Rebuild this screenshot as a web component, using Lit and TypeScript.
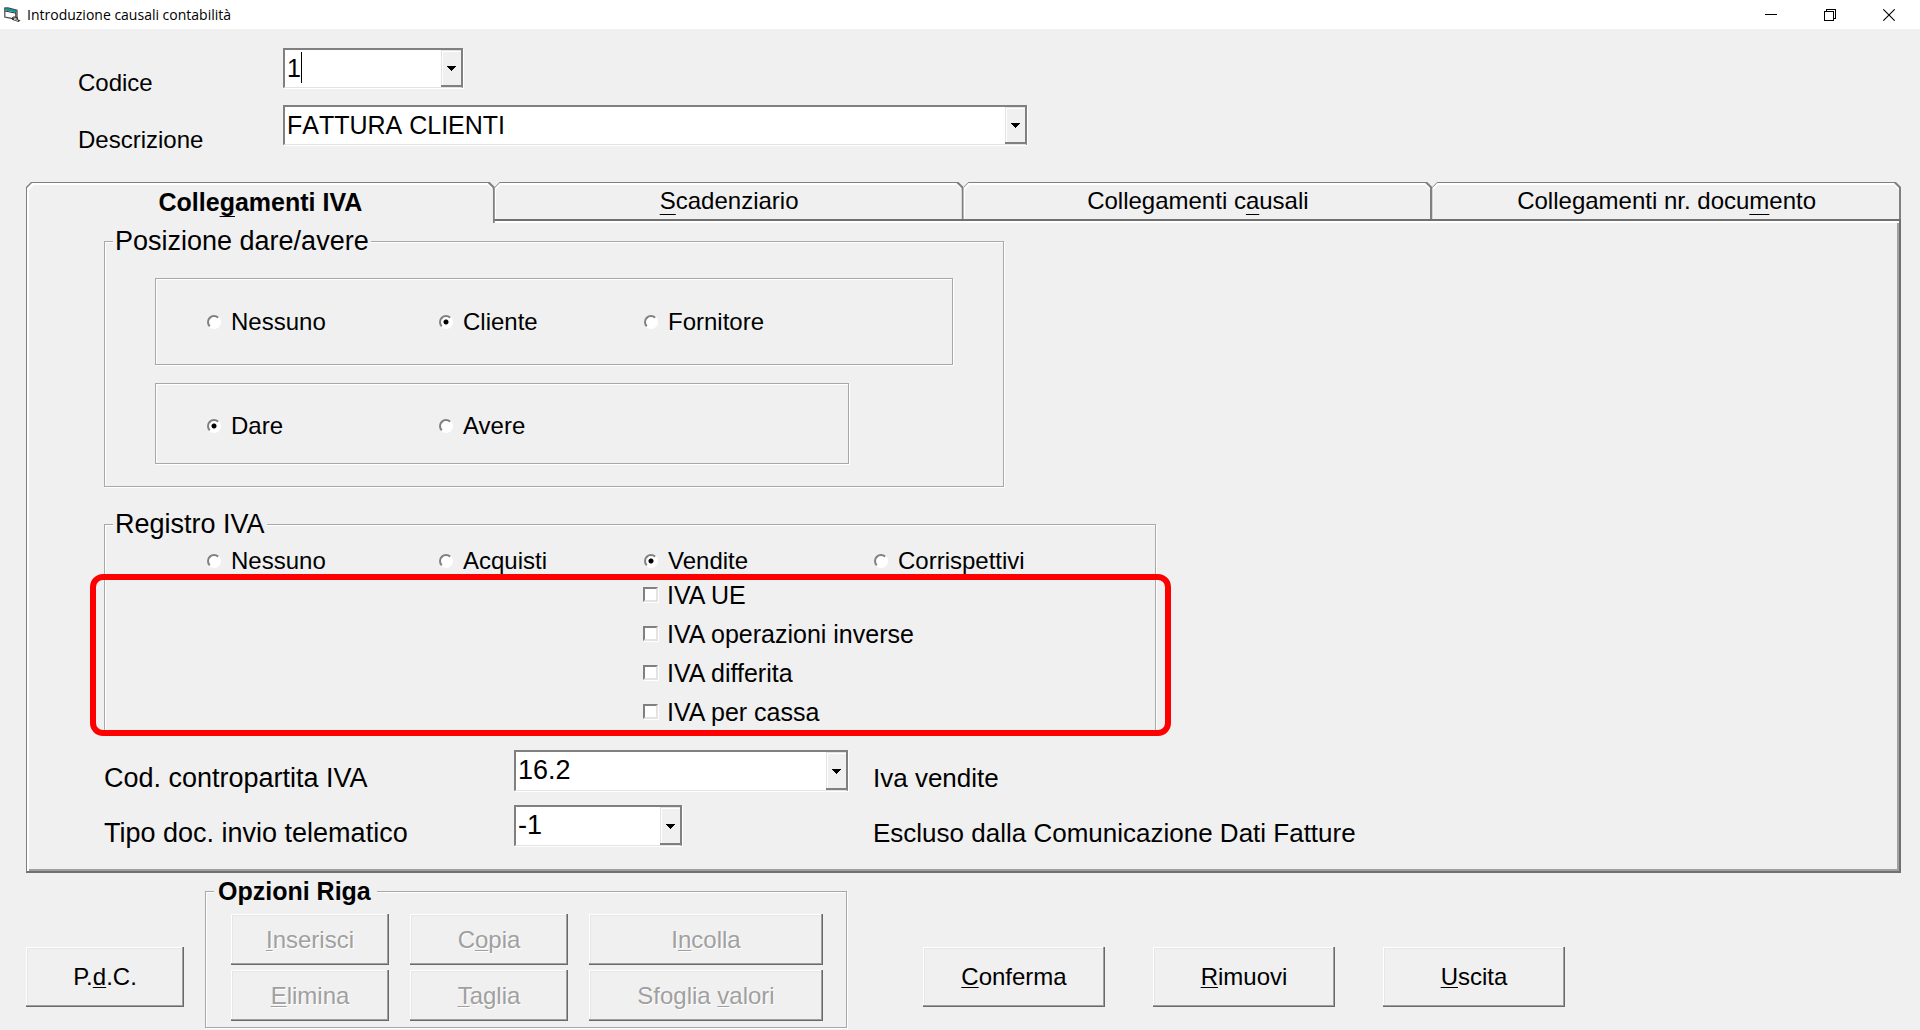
import { LitElement, html, css, svg, nothing, TemplateResult } from "lit";
import { customElement, property, state } from "lit/decorators.js";
import { classMap } from "lit/directives/class-map.js";

/** Splits a caption such as "Colle&gamenti" and underlines its access key. */
function caption(text: string): TemplateResult {
  const at = text.indexOf("&");
  if (at < 0) return html`${text}`;
  return html`${text.slice(0, at)}<u>${text[at + 1]}</u>${text.slice(at + 2)}`;
}

const arrow = svg`<path d="M0 0h9v1h-1v1h-1v1h-1v1h-1v1h-1v-1h-1v-1h-1v-1h-1v-1h-1z" fill="#000"/>`;

@customElement("combo-field")
class ComboField extends LitElement {
  @property() value = "";
  @property() label = "";
  @property({ type: Boolean }) editable = false;

  static styles = css`
    :host {
      display: block;
      font-family: "Liberation Sans", Arial, sans-serif;
    }
    .box {
      display: grid;
      grid-template-columns: 1fr 20px;
      height: var(--combo-height, 40px);
      box-sizing: border-box;
      background: #fff;
      border: 2px solid #808080;
      border-color: #808080 #808080 #e3e3e3 #808080;
      border-bottom-width: 1px;
      box-shadow: 1px 1px #fff;
      position: relative;
    }
    .entry {
      grid-row: 1;
      grid-column: 1 / 3;
      min-width: 0;
      width: 100%;
      height: 100%;
      margin: 0;
      padding: 0 22px 2px 2px;
      border: 0;
      outline: 0;
      border-radius: 0;
      appearance: none;
      background: transparent;
      color: #000;
      font: inherit;
      font-kerning: none;
    }
    .drop {
      grid-row: 1;
      grid-column: 2;
      display: flex;
      align-items: center;
      justify-content: center;
      padding: 0;
      border: 0;
      background: #f0f0f0;
      box-shadow: inset 0 -2px #808080, inset 1px 1px #e3e3e3, inset 2px 2px #fff;
      z-index: 1;
    }
    span.drop {
      pointer-events: none;
    }
    .caret {
      position: absolute;
      left: 16px;
      top: 2px;
      width: 1px;
      height: 31px;
      background: #000;
    }
  `;

  render() {
    const icon = html`<svg width="9" height="5" viewBox="0 0 9 5" shape-rendering="crispEdges">${arrow}</svg>`;
    return html`<div class="box">
      ${this.editable
        ? html`<input class="entry" aria-label=${this.label} .value=${this.value} />
            <button class="drop" aria-label="Apri elenco">${icon}</button>
            <span class="caret"></span>`
        : html`<select class="entry" aria-label=${this.label}>
              <option selected>${this.value}</option>
            </select>
            <span class="drop">${icon}</span>`}
    </div>`;
  }
}

interface Option {
  text: string;
  on?: boolean;
}

@customElement("app-root")
class AppRoot extends LitElement {
  @state() private active = 0;

  private tabs = ["Colle&gamenti IVA", "&Scadenziario", "Collegamenti c&ausali", "Collegamenti nr. docu&mento"];
  private subjects: Option[] = [{ text: "Nessuno" }, { text: "Cliente", on: true }, { text: "Fornitore" }];
  private sides: Option[] = [{ text: "Dare", on: true }, { text: "Avere" }];
  private registers: Option[] = [
    { text: "Nessuno" },
    { text: "Acquisti" },
    { text: "Vendite", on: true },
    { text: "Corrispettivi" },
  ];
  private flags = ["IVA UE", "IVA operazioni inverse", "IVA differita", "IVA per cassa"];
  private rowActions = ["&Inserisci", "C&opia", "I&ncolla", "&Elimina", "&Taglia", "Sfoglia &valori"];

  static styles = css`
    :host {
      display: flex;
      flex-direction: column;
      min-height: 100vh;
      box-sizing: border-box;
      background: #f0f0f0;
      color: #000;
      font: 25px/28px "Liberation Sans", Arial, sans-serif;
    }
    * {
      box-sizing: border-box;
    }
    u {
      text-decoration-thickness: 1px;
      text-underline-offset: 2px;
      text-decoration-skip-ink: none;
    }
    .titlebar {
      display: flex;
      align-items: center;
      height: 29px;
      padding-left: 4px;
      background: #fff;
      font: 14px/20px "Open Sans", sans-serif;
    }
    .title {
      flex: 1;
      margin: 0;
      padding-left: 6px;
      font: inherit;
    }
    .winbtn {
      display: flex;
      align-items: center;
      justify-content: center;
      width: 59px;
      height: 29px;
      padding: 0;
      border: 0;
      background: none;
    }
    .winbtns {
      display: flex;
      padding-right: 2px;
    }
    .head {
      display: grid;
      grid-template-columns: 205px minmax(0, 744px);
      row-gap: 2px;
      padding: 19px 20px 22px 78px;
    }
    .headlabel {
      padding-top: 15px;
      font-size: 24px;
      line-height: 40px;
    }
    .short {
      width: 180px;
    }
    .tabbed {
      margin: 0 19px 0 26px;
    }
    .tabs {
      display: flex;
    }
    .tab {
      flex: 1;
      position: relative;
      height: 37px;
      padding: 0;
      border: 0;
      background: #808080;
      color: #000;
      font: 24px/28px "Liberation Sans", Arial, sans-serif;
      clip-path: polygon(0 5px, 5px 0, calc(100% - 5px) 0, 100% 5px, 100% 100%, 0 100%);
    }
    .tab::before,
    .tab::after {
      content: "";
      position: absolute;
      inset: 1px 2px 0 0;
      background: #fff;
      clip-path: polygon(0 5px, 5px 0, calc(100% - 5px) 0, 100% 5px, 100% 100%, 0 100%);
    }
    .tab::after {
      inset: 3px 2px 0 1px;
      background: #f0f0f0;
    }
    .tab:first-child::before {
      left: 1px;
    }
    .tab:first-child::after {
      left: 3px;
    }
    .tab.active {
      z-index: 2;
      height: 41px;
      margin-bottom: -4px;
      padding-bottom: 2px;
      font-size: 25px;
      font-weight: bold;
    }
    .tabtext {
      position: relative;
      z-index: 1;
    }
    .tabtext u {
      text-underline-offset: 5px;
    }
    .panel {
      padding: 5px 20px 17px 77px;
      border: 1px solid #808080;
      border-top: 2px solid #707070;
      border-right: 2px solid #707070;
      border-bottom: 2px solid #707070;
      box-shadow: inset 2px 2px #fff, inset -2px -2px #a0a0a0;
    }
    .group {
      min-width: 0;
      margin: 0;
      padding: 0;
      border: 1px solid #a8a8a8;
      box-shadow: 1px 1px #fff, inset 1px 1px #fff;
    }
    .legend {
      margin-left: 8px;
      padding: 0 2px;
      background: #f0f0f0;
      font-size: 27px;
      line-height: 30px;
    }
    .position {
      max-width: 900px;
      margin-bottom: 22px;
    }
    .frames {
      display: flex;
      flex-direction: column;
      gap: 18px;
      padding: 22px 50px;
    }
    .frame {
      padding: 29px 0 28px 50px;
      border: 1px solid #a8a8a8;
      box-shadow: 1px 1px #fff, inset 1px 1px #fff;
    }
    .frame.narrow {
      max-width: 694px;
      padding: 28px 0 23px 50px;
    }
    .options {
      display: grid;
      grid-template-columns: 232px 205px 230px auto;
      font-size: 24px;
    }
    .option {
      display: flex;
      align-items: center;
      gap: 9px;
      white-space: nowrap;
    }
    .radio {
      flex: none;
      appearance: none;
      width: 14px;
      height: 14px;
      margin: 0 1px;
      border: 2px solid;
      border-color: #808080 #fff #fff #808080;
      border-radius: 50%;
      background: #fff;
    }
    .radio:checked {
      background: radial-gradient(circle, #000 0 2px, #fff 3px);
    }
    .check {
      flex: none;
      appearance: none;
      width: 15px;
      height: 15px;
      margin: 0;
      border: 2px solid;
      border-color: #808080 #e3e3e3 #e3e3e3 #808080;
      background: #fff;
      box-shadow: 1px 1px #fff;
    }
    .register {
      position: relative;
      max-width: 1052px;
      margin-bottom: 18px;
    }
    .register .options {
      padding: 8px 0 0 101px;
    }
    .flags {
      display: grid;
      grid-auto-rows: 39px;
      padding-left: 538px;
    }
    .highlight {
      position: absolute;
      inset: 65px -15px -4px -14px;
      border: 6px solid #f00;
      border-radius: 13px;
      pointer-events: none;
    }
    .codes {
      display: grid;
      grid-template-columns: 410px 359px auto;
      row-gap: 6px;
      font-size: 27px;
      --combo-height: 41px;
    }
    .codes .label {
      padding-top: 8px;
      line-height: 41px;
    }
    .codes .value {
      font-size: 26px;
    }
    .wide {
      width: 334px;
    }
    .small {
      width: 168px;
    }
    .foot {
      display: flex;
      align-items: flex-start;
      padding: 4px 19px 0 26px;
    }
    .btn {
      border: 0;
      padding: 0;
      background: #f0f0f0;
      color: #000;
      font: 24px/28px "Liberation Sans", Arial, sans-serif;
      box-shadow: inset -1px -1px #696969, inset -2px -2px #a0a0a0, inset 1px 1px #fff, inset 2px 2px #e6e6e6;
    }
    .btn:disabled {
      color: #a0a0a0;
      text-shadow: 1px 1px #fff;
    }
    .pdc {
      width: 158px;
      height: 60px;
      margin: 70px 21px 0 0;
    }
    .rows {
      padding-bottom: 6px;
    }
    .rows .legend {
      padding: 0 6px 0 4px;
      font-size: 25px;
      font-weight: bold;
      line-height: 28px;
    }
    .rowgrid {
      display: grid;
      grid-template-columns: 158px 158px 234px;
      grid-auto-rows: 51px;
      gap: 5px 21px;
      padding: 9px 23px 0 25px;
    }
    .main {
      display: flex;
      gap: 48px;
      margin: 70px 0 0 76px;
    }
    .main .btn {
      width: 182px;
      height: 60px;
    }
  `;

  private radios(name: string, items: Option[]) {
    return html`<div class="options" role="radiogroup" aria-label=${name}>
      ${items.map(
        (o) => html`<label class="option"
          ><input class="radio" type="radio" name=${name} ?checked=${!!o.on} />${o.text}</label
        >`,
      )}
    </div>`;
  }

  render() {
    return html`
      <header class="titlebar">
        <svg width="17" height="16" viewBox="0 0 17 16">
          <path d="M.8 1.200L4 .8l9 2.400v8.800" fill="none" stroke="#444" stroke-width="1.200"/>
          <path d="M.8 1.200l11 2.600v8.700L7.500 11.300.8 10z" fill="#fff" stroke="#444" stroke-width="1.200"/>
          <path d="M1.200 1.300L4 1.200l8.200 2.200v2.200L1.200 3.600z" fill="#0a9a9a"/>
          <path d="M1 4l11 2.200" stroke="#333" stroke-width="1"/>
          <path d="M8 10.500l2-1.200 4 1.200v2l2.500.7-2 1.800L8 12.800z" fill="#333"/>
          <path d="M9.500 10.800l3 .8M10 12.300l4 1.200" stroke="#eee" stroke-width="0.900"/>
        </svg>
        <h1 class="title">Introduzione causali contabilità</h1>
        <div class="winbtns">
          <button class="winbtn" aria-label="Riduci a icona">
            <svg width="12" height="12" viewBox="0 0 12 12" shape-rendering="crispEdges"><path d="M0 5h12v1H0z"/></svg>
          </button>
          <button class="winbtn" aria-label="Ripristina">
            <svg width="12" height="12" viewBox="0 0 12 12" fill="none" stroke="#000" shape-rendering="crispEdges">
              <path d="M.5 2.500h9v9h-9zM2.500 2.500v-2h9v9h-2"/>
            </svg>
          </button>
          <button class="winbtn" aria-label="Chiudi">
            <svg width="12" height="12" viewBox="0 0 12 12" stroke="#000" stroke-width="1.100">
              <path d="M.3 .3l11.400 11.400M11.700 .3L.3 11.700"/>
            </svg>
          </button>
        </div>
      </header>

      <section class="head">
        <span class="headlabel">Codice</span>
        <combo-field class="short" label="Codice" value="1" editable></combo-field>
        <span class="headlabel">Descrizione</span>
        <combo-field label="Descrizione" value="FATTURA CLIENTI"></combo-field>
      </section>

      <main class="tabbed">
        <div class="tabs" role="tablist">
          ${this.tabs.map(
            (t, i) => html`<button
              class=${classMap({ tab: true, active: i === this.active })}
              role="tab"
              aria-selected=${i === this.active}
              @click=${() => (this.active = i)}
            ><span class="tabtext">${caption(t)}</span></button>`,
          )}
        </div>
        <div class="panel" role="tabpanel">${this.active === 0 ? this.vatPanel() : nothing}</div>
      </main>

      <footer class="foot">
        <button class="btn pdc">${caption("P.&d.C.")}</button>
        <fieldset class="group rows">
          <legend class="legend">Opzioni Riga</legend>
          <div class="rowgrid">
            ${this.rowActions.map((a) => html`<button class="btn" disabled>${caption(a)}</button>`)}
          </div>
        </fieldset>
        <div class="main">
          ${["&Conferma", "&Rimuovi", "&Uscita"].map((a) => html`<button class="btn">${caption(a)}</button>`)}
        </div>
      </footer>
    `;
  }

  private vatPanel() {
    return html`
      <fieldset class="group position">
        <legend class="legend">Posizione dare/avere</legend>
        <div class="frames">
          <div class="frame">${this.radios("soggetto", this.subjects)}</div>
          <div class="frame narrow">${this.radios("segno", this.sides)}</div>
        </div>
      </fieldset>
      <div class="register">
        <fieldset class="group">
          <legend class="legend">Registro IVA</legend>
          ${this.radios("registro", this.registers)}
          <div class="flags">
            ${this.flags.map((f) => html`<label class="option"><input class="check" type="checkbox" />${f}</label>`)}
          </div>
        </fieldset>
        <div class="highlight"></div>
      </div>
      <div class="codes">
        <span class="label">Cod. contropartita IVA</span>
        <combo-field class="wide" label="Cod. contropartita IVA" value="16.2"></combo-field>
        <span class="label value">Iva vendite</span>
        <span class="label">Tipo doc. invio telematico</span>
        <combo-field class="small" label="Tipo doc. invio telematico" value="-1"></combo-field>
        <span class="label value">Escluso dalla Comunicazione Dati Fatture</span>
      </div>
    `;
  }
}
